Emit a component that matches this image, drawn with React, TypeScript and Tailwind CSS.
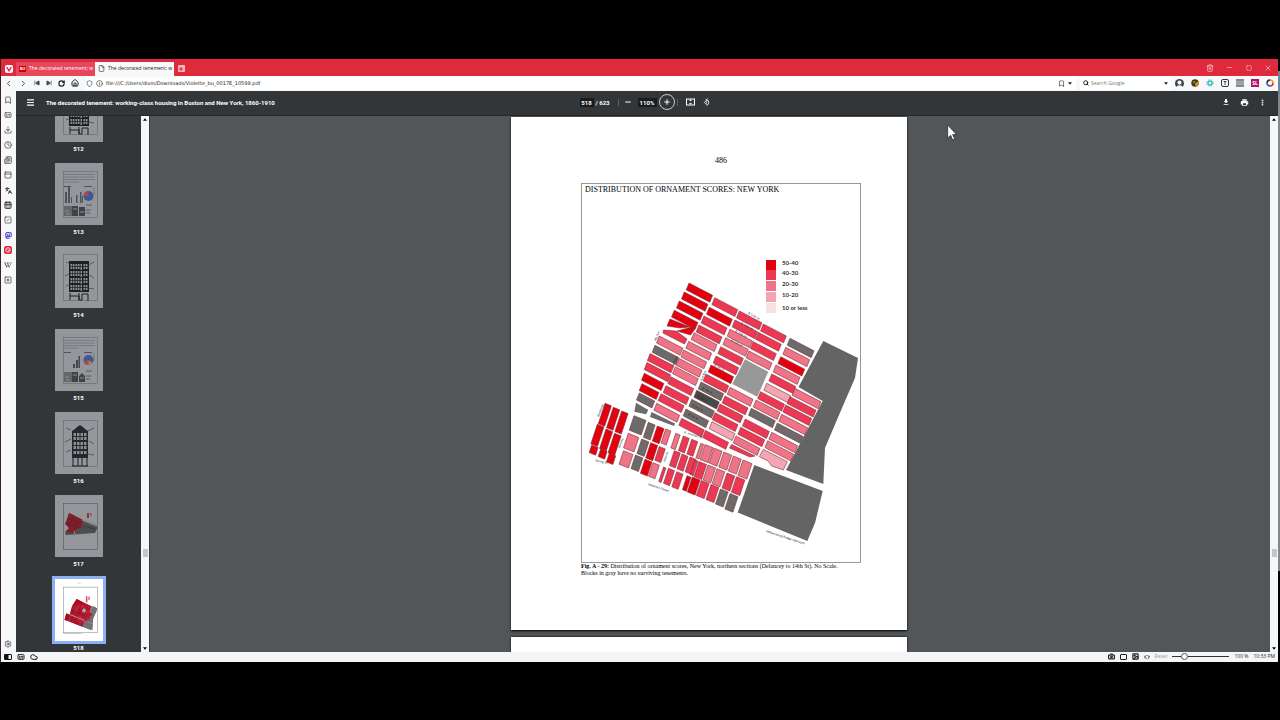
import * as React from "react";
import {
  Bookmark,
  CalendarDays,
  Camera,
  Captions,
  ChevronLeft,
  ChevronRight,
  Clock,
  Cloud,
  Code,
  Download,
  File,
  Home,
  Image as ImageIcon,
  Info,
  Languages,
  Menu,
  Minus,
  MoreVertical,
  Newspaper,
  PanelTop,
  Plus,
  RotateCw,
  Search,
  Settings,
  Shield,
  SkipBack,
  SkipForward,
  Square,
  SquareCheck,
  SquarePlus,
  Trash2,
  X,
} from "lucide-react";
import { MdDownload, MdPrint } from "react-icons/md";
import { SiMastodon, SiWikipedia } from "react-icons/si";

const D = "#e3000f"; // 50-40
const M = "#ec3853"; // 40-30
const P = "#ef7488"; // 20-30
const L = "#f4a5b3"; // 10-20
const X0 = "#f8e1e3"; // 10 or less
const G = "#6b6b6b"; // no surviving tenements
const K = "#454947";

type Block = [number, number, string];

// north of Houston St: top-left corner of each block, one list per column
const columns: { w: number; blocks: Block[] }[] = [
  {
    w: 23.6,
    blocks: [
      [689, 283, D], [684.3, 292, D], [679.3, 301, D], [674.3, 310.2, D],
      [659.3, 336, P], [655, 345.3, G], [650.2, 353.6, M], [647, 362.6, M],
    ],
  },
  { w: 19.6, blocks: [[644.3, 373.3, D]] },
  { w: 17, blocks: [[642, 383.7, D]] },
  { w: 15.4, blocks: [[639.3, 393, G]] },
  {
    w: 23,
    blocks: [
      [714.7, 297.7, M], [709.3, 307.3, D], [704, 316, M], [699, 325, M],
      [694, 332.7, P], [688.7, 341.3, P], [683.7, 350, P], [679, 358.3, P],
      [675.3, 366.7, P], [670.7, 376.7, M], [666, 385.7, M], [661, 393.7, M],
      [656.7, 403.3, P],
    ],
  },
  {
    w: 22.6,
    blocks: [
      [739.3, 311, M], [735, 320, M], [730, 329.3, P], [725.7, 337.7, P],
      [720.7, 346.7, M], [716, 356, M], [711, 365, D], [706, 374, M],
      [701, 382, G], [696.7, 390.3, K], [691.7, 399.3, G], [686, 409, G],
      [681.7, 418.3, M],
    ],
  },
  {
    w: 23,
    blocks: [
      [763.3, 324, M], [758.3, 332.3, M], [753.3, 341.7, M], [749, 351, P],
      [730, 387.3, P], [725, 396, M], [720, 404, M], [715, 412.7, M],
      [712, 421.7, L], [705.5, 430.5, M],
    ],
  },
  {
    w: 24,
    blocks: [
      [790, 338.3, G], [785.7, 347.3, P], [780.7, 356.7, D], [776, 365, P],
      [771.7, 374, M], [766.7, 383.3, L], [760.5, 391.7, M], [756, 400, P],
      [751.3, 408.3, G], [745.3, 419, M], [740.7, 427.3, M], [736, 436, P],
    ],
  },
  {
    w: 26,
    blocks: [
      [795, 388.3, P], [790, 396.7, M], [785.7, 405, M], [781.7, 414.3, P],
      [777.3, 423, G], [771.7, 432.3, P], [767.7, 440.7, P],
    ],
  },
];

const bar = (x: number, y: number, w: number) => {
  const dy = w * 0.52;
  return `${x},${y} ${x + w},${y + dy} ${x + w - 2.8},${y + dy + 6.9} ${x - 2.8},${y + 6.9}`;
};

// [x, y, width, height, fill] for the upright blocks south of Houston St
const southBlocks: [number, number, number, number, string][] = [
  [605, 403.3, 6.4, 20.5, D], [613.3, 407.3, 6.4, 20.5, D], [621.7, 411, 6.4, 20.5, D],
  [597.3, 424.3, 6.6, 19.5, D], [606, 429, 6.6, 19.5, D], [614.5, 433.3, 6.6, 19.5, D],
  [591.7, 445, 6.4, 7.6, D], [600.7, 449, 6.4, 7.6, D], [609.3, 453.3, 6.4, 8.6, D],
  [634, 415.7, 12, 14.5, G], [628.3, 433.3, 10.5, 14.5, P], [623.5, 450.7, 9.5, 13.5, P],
  [648.3, 422.3, 6.8, 15, G], [641.7, 439, 7.2, 14.5, G], [635.5, 455, 7.4, 13.6, G],
  [657.3, 426, 6.8, 15, D], [650.7, 442.7, 7, 15.2, D], [645, 459.3, 7, 14, D],
  [665.7, 429, 5.2, 14, P], [659.3, 446.5, 6, 13.7, M], [653, 462.7, 6.4, 13.5, P],
  [675.7, 433.3, 4.4, 14.6, P], [683.3, 436, 6, 14.6, M], [691.7, 439.3, 6, 14.6, M],
  [674.3, 450.7, 6, 14.8, M], [682, 454, 6, 14.8, M], [690, 457, 6, 14.8, M],
  [663.5, 467, 2.4, 14.5, M], [668.5, 468.3, 6, 15, M], [676.7, 471.7, 6.4, 15, M],
  [700.7, 443.3, 3, 14.5, P], [705, 444.5, 8, 15, P], [714, 448, 8, 15, P],
  [723.7, 452, 8, 15, P], [733.3, 456, 8, 15, P], [743, 460, 9, 15.5, P],
  [695, 460, 3, 14.5, M], [699, 461.5, 7.6, 15, M], [708, 465, 7.6, 15, P],
  [717, 468.7, 7.8, 15, P], [727, 473, 7.8, 15, M], [736.5, 476.7, 8.4, 15.5, M],
  [687, 475.7, 4, 14, D], [692.3, 477, 7.8, 15, D], [701.3, 480.5, 7.8, 15, M],
  [711, 484.5, 7.8, 15, M], [720.5, 489, 7.6, 15, G], [730, 493.5, 8, 15.5, G],
];

const upright = (x: number, y: number, w: number, h: number) => {
  const dy = w * 0.4;
  const sx = h * 0.33;
  return `${x},${y} ${x + w},${y + dy} ${x + w - sx},${y + dy + h} ${x - sx},${y + h}`;
};

const legend: { fill: string; y: number; textY: number; label: string }[] = [
  { fill: D, y: 260, textY: 265, label: "50-40" },
  { fill: M, y: 270, textY: 275, label: "40-30" },
  { fill: P, y: 281, textY: 286, label: "20-30" },
  { fill: L, y: 292, textY: 297, label: "10-20" },
  { fill: X0, y: 303, textY: 310, label: "10 or less" },
];

// x, y, angle, name
const streets: [number, number, number, string][] = [
  [748, 314, 28, "E 14th St"],
  [741, 324, 28, "E 13th St"],
  [735, 332, 28, "E 12th St"],
  [731, 341, 28, "E 11th St"],
  [714, 366, 28, "E 7th St"],
  [702, 389, 28, "E 4th St"],
  [697, 397, 28, "E 3rd St"],
  [692, 406, 28, "E 2nd St"],
  [688, 415, 28, "E 1st St"],
  [684, 433, 18, "E. Houston St"],
  [648, 485, 19, "Delancey Street"],
  [595, 461, 14, "Spring St"],
  [766, 532, 18, "Williamsburg Bridge Approach"],
  [656, 341, -68, "4th Ave"],
  [599, 417, -70, "Broadway"],
  [674, 366, -66, "3rd Ave"],
  [702, 381, -66, "2nd Ave"],
  [620, 448, -70, "Bowery"],
  [665, 462, -70, "Allen St"],
];

function Blocks() {
  return (
    <g strokeLinejoin="round">
      <g stroke="#7a3037" strokeWidth="0.6">
        {columns.map((col, i) =>
          col.blocks.map(([x, y, fill]) => (
            <polygon key={`${i}-${x}`} points={bar(x, y, col.w)} fill={fill} />
          ))
        )}
        {southBlocks.map(([x, y, w, h, fill]) => (
          <polygon key={`${x}-${y}`} points={upright(x, y, w, h)} fill={fill} />
        ))}
        <polygon points="670,319 690,327 680,328 667,326" fill={D} />
        <polygon points="677,331 692,327 695,329 690.5,335" fill={D} />
        <polygon points="663.5,330 676,331 687,339 684.5,344 663,333" fill={M} />
        <polygon points="731.7,444.5 755,456 750,457 729.5,448" fill={M} />
        <polygon points="763.3,449.3 787.3,461.7 783.3,470 771.7,466 768,461 759.3,456.7" fill={L} />
      </g>
      <g fill={G}>
        <polygon points="636,402.7 648.3,410 646,414.3 634.3,411.7" />
        <polygon points="651.5,412 675,423.5 674,426 650,417" />
        <polygon points="745,359.3 768.3,371.7 757.3,396.7 732.3,384" fill="#989898" />
        <polygon points="823.3,341 858,358 855,378 842,408 825,448 823.3,484 786,470 822.7,401 798.5,387" fill="#646464" />
        <polygon points="754.3,465 822.7,491 815,523 807.3,541 737.7,512.5" fill="#646464" />
      </g>
    </g>
  );
}

function OrnamentMap() {
  return (
    <svg viewBox="582 184 278 378" className="block w-full" aria-label="Map of ornament scores">
      <Blocks />
      {legend.map(({ fill, y, textY, label }) => (
        <g key={label}>
          <rect x="766" y={y} width="10" height="10" fill={fill} />
          <text x="782" y={textY} fontSize="6" fontWeight="700" fontFamily="Lato, sans-serif" fill="#333">
            {label}
          </text>
        </g>
      ))}
      {streets.map(([x, y, r, name]) => (
        <text
          key={name}
          transform={`translate(${x} ${y}) rotate(${r})`}
          fontSize="3"
          fontFamily="'Liberation Sans', sans-serif"
          fill="#222"
        >
          {name}
        </text>
      ))}
    </svg>
  );
}

function MapThumb() {
  return (
    <svg viewBox="511 117 396 513" preserveAspectRatio="none" className="size-full">
      <rect x="581" y="184" width="279" height="378" fill="none" stroke="#777" strokeWidth="4" />
      <polygon points="690,283 815,345 795,388 822,402 784,470 755,465 738,512 590,455 604,403 634,410 652,340" fill="#8c1a2a" />
      <g opacity=".75">
        <Blocks />
      </g>
      <polygon points="690,283 815,345 795,388 822,402 784,470 755,465 738,512 590,455 604,403 634,410 652,340" fill="#b0001c" opacity=".45" />
      <polygon points="823,341 858,358 855,378 825,448 823,541 738,512 755,465 786,470 822,401 798,387" fill="#666" opacity=".7" />
      <polygon points="745,359 768,372 757,397 732,384" fill="#aaa" />
      <path d="M630 410l125 50" stroke="#fff" strokeWidth="4" fill="none" />
      <rect x="766" y="260" width="12" height="50" fill={M} />
      <rect x="782" y="262" width="18" height="30" fill="#c9a5a8" />
      <path d="M581 568h150M700 150h24" stroke="#999" strokeWidth="4" />
    </svg>
  );
}

function LowerMapThumb() {
  return (
    <svg viewBox="0 0 48 62" className="size-full">
      <rect x="8.5" y="8.5" width="34" height="46" fill="none" stroke="#555" strokeWidth=".6" />
      <path d="M14 18l14 7 13 5 1.500 3-2.500 5-14 1-15 1-1-2 5-4-3-4 1-6z" fill="#4b4d4f" />
      <path d="M14 18l14 7-2 8-7 2 2 3-11-1 4-4-4-4 2-5z" fill="#861c2b" />
      <path d="M12 23l14 6M11 28l13 5M19 20l-5 13M24 23l-5 12M28 31l12 3" stroke="#3f2529" strokeWidth=".6" />
      <path d="M19 36l1 3M27 25l14 6" stroke="#a9acae" strokeWidth=".7" />
      <path d="M32 18h2v5h-2z" fill="#96293a" />
      <path d="M35 18h1.500v3H35z" fill="#6f5a5e" />
    </svg>
  );
}

function ChartThumb({ alt }: { alt?: boolean }) {
  return (
    <svg viewBox="0 0 48 62" className="size-full">
      <rect x="8.5" y="8.5" width="34" height="46" fill="none" stroke="#666" strokeWidth=".6" />
      <path d="M9 11.500h31M9 14h31M9 16.500h31M9 19h15" stroke="#5c6064" strokeWidth=".5" />
      <path d="M9 23.500h7M29 23.500h8" stroke="#333" strokeWidth=".7" />
      {alt ? (
        <path d="M18 39v-4h2v4zM21 39v-8h2v8zM23.500 39V27h1.500v12z" fill="#4a4548" />
      ) : (
        <path d="M10 40V29h2v11zM13 40V24h2v16zM16 40v-6h1v6zM21 40v-8h1.500v8zM25 40V29h1.500v11zM27 40v-7h1v7z" fill="#4f5256" />
      )}
      <circle cx="33.500" cy={alt ? 31 : 33} r="5" fill="#3f5796" />
      <path d={alt ? "M33.500 31l-5 1a5 5 0 0 0 4.500 4z" : "M33.500 33v-5a5 5 0 0 0-5 5z"} fill="#a84a48" />
      {alt && <path d="M33.500 31v5a5 5 0 0 0 4-2z" fill="#b8873c" />}
      <path d="M9 43h9v10H9z" fill="#64676a" />
      <path d={alt ? "M17 43h6v10h-6zM24 53v-6l3-3 3 3v6z" : "M17 43h6v10h-6zM24 53v-9h6v9z"} fill="#404346" />
      <path d="M10 48h4M11 51h4M18 46h4M25 49h4" stroke="#8d9094" />
      <path d="M31 42h6M31 47h5M31 50h4" stroke="#333" strokeWidth=".6" />
      <path d="M39 24v8" stroke="#666" strokeWidth=".6" />
    </svg>
  );
}

function BuildingThumb({ gabled }: { gabled?: boolean }) {
  const rows = gabled ? [21, 25, 30, 34, 39] : [18, 25, 32, 39];
  return (
    <svg viewBox="0 0 48 62" className="size-full">
      <rect x="8.500" y="8.500" width="34" height="46" fill="none" stroke="#666" strokeWidth=".6" />
      {gabled ? (
        <path d="M17 46V19l3-2 2-2 3-2 3 2 2 2 3 2v27z" fill="#26292b" />
      ) : (
        <path d="M14 46V15h20v31z" fill="#1d2022" />
      )}
      {rows.map((y) => (
        <g key={y} fill="#8b8e92">
          {gabled ? (
            <path d={`M18.500 ${y}h2.500v3h-2.500zM22 ${y}h2.500v3h-2.500zM25.500 ${y}h2.500v3h-2.500zM29 ${y}h2.500v3h-2.500z`} />
          ) : (
            <path d={`M15.500 ${y}h4v5h-4zM20.500 ${y}h4v5h-4zM25.500 ${y}h1.500v6h-1.500zM28.500 ${y}h4v5h-4z`} />
          )}
          {!gabled && <path d={`M17.500 ${y}v5M22.500 ${y}v5M30.500 ${y}v5M15 ${y + 2.5}h18`} stroke="#1d2022" strokeWidth=".7" />}
        </g>
      ))}
      <path
        d={gabled ? "M18 46v8M23 46v8M27 46v8M32 46v8M17 54h16" : "M15 47v7M24 47v7h3v-6h6v7M15 50h9v4"}
        fill="none"
        stroke="#1d2022"
      />
      <path d="M11 16l5 2M10 30l6-3M11 40l5-2M33 19l6-3M34 29l5 3M33 42l6 1" stroke="#333" strokeWidth=".6" />
    </svg>
  );
}

const pages = [
  { n: 512, art: <BuildingThumb /> },
  { n: 513, art: <ChartThumb /> },
  { n: 514, art: <BuildingThumb /> },
  { n: 515, art: <ChartThumb alt /> },
  { n: 516, art: <BuildingThumb gabled /> },
  { n: 517, art: <LowerMapThumb /> },
  { n: 518, art: <MapThumb /> },
];

const panels = [
  { label: "Bookmarks", icon: <Bookmark size={8} /> },
  { label: "Reading list", icon: <Captions size={8} /> },
  { label: "Downloads", icon: <Download size={8} /> },
  { label: "History", icon: <Clock size={8} /> },
  { label: "Notes", icon: <Newspaper size={8} /> },
  { label: "Window", icon: <PanelTop size={8} /> },
  { label: "Translate", icon: <Languages size={7} strokeWidth={3} /> },
  { label: "Calendar", icon: <CalendarDays size={8} strokeWidth={3} /> },
  { label: "Tasks", icon: <SquareCheck size={8} /> },
  { label: "Mastodon", icon: <SiMastodon size={7} className="text-[#5a4bd6]" /> },
  { label: "Vivaldi", icon: <VivaldiBadge /> },
  { label: "Wikipedia", icon: <SiWikipedia size={8} /> },
  { label: "Add web panel", icon: <SquarePlus size={8} /> },
];

function VivaldiBadge() {
  return (
    <svg viewBox="0 0 14 14" className="size-[8px]">
      <rect width="14" height="14" rx="4" fill="#d9213c" />
      <circle cx="7" cy="7" r="4" fill="none" stroke="#fff" strokeWidth="1.500" />
      <path d="M7 5v2.500l2 1" fill="none" stroke="#fff" strokeWidth="1.200" />
    </svg>
  );
}

function IconButton({ label, className = "", children }: { label: string; className?: string; children: React.ReactNode }) {
  return (
    <button type="button" aria-label={label} className={`flex shrink-0 items-center justify-center ${className}`}>
      {children}
    </button>
  );
}

function Caret({ up }: { up?: boolean }) {
  return (
    <svg viewBox="0 0 6 4" className="h-[3px] w-[4px]">
      <path d={up ? "M0 4L3 0l3 4z" : "M0 0l3 4 3-4z"} fill="currentColor" />
    </svg>
  );
}

function Scrollbar() {
  return (
    <div className="flex w-[8px] shrink-0 flex-col items-center justify-between bg-[#f4f6f8] py-[2px] text-black">
      <Caret up />
      <div className="grow-[435]" />
      <div className="h-[8px] w-[5px] bg-[#c3c5c8]" />
      <div className="grow-[92]" />
      <Caret />
    </div>
  );
}

function TitleBar() {
  return (
    <header className="flex h-[17px] items-end bg-[#df293c] text-[5px] text-white">
      <IconButton label="Vivaldi menu" className="h-[14px] w-[15px]">
        <svg viewBox="0 0 16 16" className="size-[8px]">
          <rect width="16" height="16" rx="4" fill="#fff" />
          <path d="M4 5l4 7 4-7" fill="none" stroke="#df293c" strokeWidth="3" strokeLinecap="round" strokeLinejoin="round" />
        </svg>
      </IconButton>
      <button type="button" className="flex h-[14px] w-[79px] items-center gap-[3px] bg-[#e8465a] pl-[3px]">
        <span className="w-[7px] bg-[#c00] text-center text-[4px] leading-[6px] font-bold">BU</span>
        <span className="whitespace-nowrap">The decorated tenement: w</span>
      </button>
      <button type="button" className="flex h-[14px] w-[79px] items-center gap-[3px] bg-[#f7f8fa] pl-[3px] text-[#222]">
        <File size={7} className="shrink-0" />
        <span className="whitespace-nowrap">The decorated tenement: w</span>
      </button>
      <IconButton label="New tab" className="h-[14px] w-[14px]">
        <span className="flex size-[7px] items-center justify-center rounded-[1px] bg-[#f8b5bd] text-[#df293c]">
          <Plus size={6} strokeWidth={4} />
        </span>
      </IconButton>
      <div className="mb-[4px] ml-auto flex items-center gap-3 pr-[6px] text-[#fbd5d9]">
        <IconButton label="Closed tabs"><Trash2 size={8} /></IconButton>
        <IconButton label="Minimize"><Minus size={7} /></IconButton>
        <IconButton label="Maximize" className="ml-px"><Square size={6} /></IconButton>
        <IconButton label="Close"><X size={8} /></IconButton>
      </div>
    </header>
  );
}

function AddressBar() {
  return (
    <div className="flex h-[15px] items-center bg-[#f7f8fa] text-[#222]">
      <div className="flex items-center gap-[6px] pl-[3px]">
        <IconButton label="Back"><ChevronLeft size={9} /></IconButton>
        <IconButton label="Forward"><ChevronRight size={9} /></IconButton>
        <IconButton label="Rewind"><SkipBack size={6} fill="#555" /></IconButton>
        <IconButton label="Fast forward"><SkipForward size={6} fill="#555" /></IconButton>
        <IconButton label="Reload"><RotateCw size={7} strokeWidth={4} /></IconButton>
        <IconButton label="Home"><Home size={8} strokeWidth={3} /></IconButton>
      </div>
      <div className="ml-[7px] flex h-[13px] grow items-center gap-[3px] bg-white">
        <Shield size={7} />
        <Info size={7} />
        <input
          aria-label="Address"
          className="w-0 grow font-['DejaVu_Sans',sans-serif] text-[5px] leading-[10px] outline-none"
          defaultValue="file:///C:/Users/divin/Downloads/Violette_bu_0017E_10599.pdf"
        />
        <IconButton label="Bookmark page"><Bookmark size={7} /></IconButton>
        <IconButton label="Show bookmarks" className="mr-1"><Caret /></IconButton>
      </div>
      <div className="ml-1 flex h-[13px] w-[91px] items-center gap-[2px] bg-white pl-[3px]">
        <Search size={6} strokeWidth={4} />
        <input aria-label="Search" placeholder="Search Google" className="w-0 grow text-[5px] leading-[10px] outline-none placeholder:text-[#777]" />
        <IconButton label="Search engines" className="mr-[3px]"><Caret /></IconButton>
      </div>
      <div className="flex items-center gap-[7px] px-[4px]">
        <IconButton label="Profile">
          <svg viewBox="0 0 20 20" className="size-[9px]">
            <circle cx="10" cy="10" r="10" fill="#444" />
            <circle cx="10" cy="8" r="4.500" fill="#f7f8fa" />
            <path d="M3 20a7 6 0 0 1 14 0z" fill="#f7f8fa" />
          </svg>
        </IconButton>
        <IconButton label="Privacy Badger">
          <svg viewBox="0 0 16 16" className="size-[8px]">
            <circle cx="8" cy="8" r="7.500" fill="#4a3a1c" />
            <path d="M8 8L15 5A7 7 0 0 1 9 15z" fill="#c59524" />
            <circle cx="6" cy="6" r="2" fill="#a8842e" />
          </svg>
        </IconButton>
        <IconButton label="Extension settings">
          <svg viewBox="0 0 16 16" className="size-[8px]" fill="none" stroke="#45bdb9">
            <circle cx="8" cy="8" r="4" strokeWidth="3" />
            <circle cx="8" cy="8" r="6.500" strokeWidth="2" strokeDasharray="2.500 2.600" />
          </svg>
        </IconButton>
        <IconButton label="Text tool">
          <span className="flex size-[8px] items-center justify-center rounded-[2px] border border-[#333] text-[5px] leading-none font-bold">T</span>
        </IconButton>
        <IconButton label="Reader"><span className="size-[8px] border-y-2 border-[#8a8a8a] bg-[#a2a2a2]" /></IconButton>
        <IconButton label="Script lens">
          <span className="flex h-[8px] w-[8px] items-center justify-center bg-[#b3126c] text-[5px] leading-none font-bold text-white">SL</span>
        </IconButton>
        <IconButton label="Color picker">
          <svg viewBox="0 0 16 16" className="size-[8px]" fill="none" strokeWidth="3">
            <path d="M8 2a6 6 0 0 1 6 6" stroke="#e8a020" />
            <path d="M14 8a6 6 0 0 1-6 6" stroke="#d9263a" />
            <path d="M8 14a6 6 0 0 1-6-6" stroke="#2458c8" />
            <path d="M2 8a6 6 0 0 1 6-6" stroke="#222" />
          </svg>
        </IconButton>
      </div>
    </div>
  );
}

function PdfToolbar() {
  return (
    <div className="grid h-[25px] grid-cols-[1fr_auto_1fr] items-center border-b border-[#26292c] bg-[#323639] pb-px font-[Roboto,sans-serif] text-[6px] font-bold text-white">
      <div className="flex items-center gap-[11px] pl-[10px]">
        <IconButton label="Menu"><Menu size={9} strokeWidth={3} /></IconButton>
        <h1 className="whitespace-nowrap">The decorated tenement: working-class housing in Boston and New York, 1860-1910</h1>
      </div>
      <div className="flex items-center pr-[4px]">
        <input aria-label="Page" defaultValue="518" className="h-[9px] w-[14px] bg-[#191b1c] text-center outline-none" />
        <span className="ml-[2px] w-[14px] whitespace-nowrap">/ 623</span>
        <span className="ml-[8px] h-[7px] w-px bg-[#5c6063]" />
        <IconButton label="Zoom out" className="ml-[5px]"><Minus size={8} strokeWidth={3} /></IconButton>
        <input aria-label="Zoom" defaultValue="110%" className="ml-[6px] h-[9px] w-[19px] bg-[#191b1c] text-center outline-none" />
        <IconButton label="Zoom in" className="ml-[2px] size-[16px] rounded-full border border-[#c8cacc]"><Plus size={8} strokeWidth={3} /></IconButton>
        <span className="ml-[2px] h-[7px] w-px bg-[#5c6063]" />
        <IconButton label="Fit to page" className="ml-[8px]">
          <svg viewBox="0 0 18 16" className="h-[8px] w-[9px]" fill="none" stroke="currentColor" strokeWidth="2">
            <rect x="1" y="2" width="16" height="12" />
            <path d="M9 3v3M9 10v3M7 6l2-2 2 2M7 10l2 2 2-2" />
          </svg>
        </IconButton>
        <IconButton label="Rotate" className="ml-[8px]">
          <svg viewBox="0 0 18 18" className="size-[8px]" fill="none" stroke="currentColor" strokeWidth="2">
            <path d="M7 4a6 6 0 1 1 0 12M10 1L7 4l3 3" />
            <path d="M6 7l3 3-3 3-3-3z" />
          </svg>
        </IconButton>
      </div>
      <div className="flex items-center justify-end gap-[10px] pr-[12px]">
        <IconButton label="Download"><MdDownload size={8} /></IconButton>
        <IconButton label="Print"><MdPrint size={9} /></IconButton>
        <IconButton label="More"><MoreVertical size={7} strokeWidth={4} /></IconButton>
      </div>
    </div>
  );
}

function Thumbnails() {
  return (
    <div className="flex w-[133px] shrink-0 overflow-hidden">
      <div className="grow">
        <ul className="-mt-[36px] flex flex-col items-center gap-[9px]">
          {pages.map(({ n, art }) => (
            <li key={n}>
              <button type="button" className="flex flex-col items-center gap-[2px]">
                <span
                  className={
                    n === 518
                      ? "mt-px block h-[62px] w-[48px] bg-white ring-[3px] ring-[#8ab0f5]"
                      : "block h-[62px] w-[48px] bg-[#93969a]"
                  }
                >
                  {art}
                </span>
                <span className="font-[Roboto,sans-serif] text-[6px] leading-[10px] font-bold text-white">{n}</span>
              </button>
            </li>
          ))}
        </ul>
      </div>
      <Scrollbar />
    </div>
  );
}

function Viewer() {
  return (
    <main className="flex grow overflow-hidden border-l border-[#3a3d40] bg-[#525659]">
      <div className="flex grow flex-col items-center gap-[7px] pt-px pr-[2px]">
        <article className="w-[396px] shrink-0 bg-white pb-[53px] font-['Liberation_Serif',serif] text-black shadow-[0_1px_2px_#000]">
          <p className="pt-[39px] pl-[24px] text-center text-[8px] leading-[10px]">486</p>
          <figure className="mt-[17px] ml-[70px] w-[280px]">
            <div className="grid border border-[#999]">
              <h2 className="z-10 col-start-1 row-start-1 pt-[2px] pl-[3px] text-[8px] leading-[8px]">
                DISTRIBUTION OF ORNAMENT SCORES: NEW YORK
              </h2>
              <div className="col-start-1 row-start-1">
                <OrnamentMap />
              </div>
            </div>
            <figcaption className="text-[6px] leading-[7px] whitespace-nowrap">
              <b>Fig. A - 29:</b> Distribution of ornament scores, New York, northern sections (Delancey to 14th St). No Scale.
              <br />
              Blocks in gray have no surviving tenements.
            </figcaption>
          </figure>
        </article>
        <article className="w-[396px] grow bg-white shadow-[0_0_2px_#000]" />
      </div>
      <Scrollbar />
    </main>
  );
}

function StatusBar() {
  return (
    <footer className="flex h-[10px] shrink-0 items-center bg-[#f4f5f8] text-[5px] text-[#222]">
      <div className="flex items-center gap-[5px] pl-[3px]">
        <IconButton label="Toggle panel">
          <svg viewBox="0 0 16 12" className="h-[6px] w-[8px]">
            <rect x="1" y="1" width="14" height="10" rx="1" fill="none" stroke="#111" strokeWidth="2" />
            <rect x="1" y="1" width="8" height="10" fill="#111" />
          </svg>
        </IconButton>
        <IconButton label="Break mode"><Captions size={8} strokeWidth={3} /></IconButton>
        <IconButton label="Sync"><Cloud size={8} strokeWidth={3} /></IconButton>
      </div>
      <div className="ml-auto flex items-center gap-[5px] pr-[3px]">
        <IconButton label="Capture page"><Camera size={7} strokeWidth={4} /></IconButton>
        <IconButton label="Page tiling">
          <span className="h-[6px] w-[7px] rounded-[1px] border border-[#222]" />
        </IconButton>
        <IconButton label="Toggle images"><ImageIcon size={7} strokeWidth={4} /></IconButton>
        <IconButton label="Page actions"><Code size={6} strokeWidth={4} /></IconButton>
        <button type="button" className="text-[#999]">Reset</button>
        <input
          type="range"
          aria-label="Page zoom"
          min={20}
          max={500}
          defaultValue={100}
          className="h-[7px] w-[57px] appearance-none bg-transparent bg-[linear-gradient(#333,#333)] bg-[length:100%_1px] bg-center bg-no-repeat [&::-webkit-slider-thumb]:size-[7px] [&::-webkit-slider-thumb]:appearance-none [&::-webkit-slider-thumb]:rounded-full [&::-webkit-slider-thumb]:border [&::-webkit-slider-thumb]:border-[#555] [&::-webkit-slider-thumb]:bg-white"
        />
        <span>100 %</span>
        <span>10:33 PM</span>
      </div>
    </footer>
  );
}

export default function App() {
  return (
    <div className="relative flex h-screen flex-col bg-black py-[58px] font-['Open_Sans',sans-serif]">
      <div className="flex min-h-0 grow pt-px">
        <div className="flex min-w-0 grow flex-col border-l border-[#3b2226]">
          <TitleBar />
          <AddressBar />
          <div className="flex min-h-0 grow">
            <nav aria-label="Panels" className="flex w-[15px] shrink-0 flex-col bg-[#f7f8fa] pt-[2px] pr-px text-[#333]">
              {panels.map(({ label, icon }) => (
                <IconButton key={label} label={label} className="h-[15px]">{icon}</IconButton>
              ))}
              <IconButton label="Settings" className="mt-auto mb-[4px]"><Settings size={8} /></IconButton>
            </nav>
            <div className="flex min-w-0 grow flex-col bg-[#323639]">
              <PdfToolbar />
              <div className="flex min-h-0 grow">
                <Thumbnails />
                <Viewer />
              </div>
            </div>
          </div>
          <StatusBar />
        </div>
        <div className="flex w-[2px] shrink-0 flex-col">
          <div className="h-[12px]" />
          <div className="h-[24px] bg-[#6f8790]" />
          <div className="h-[476px] bg-[#85878a]" />
        </div>
      </div>
      <svg viewBox="0 0 10 17" className="absolute top-[124px] left-[947px] h-[17px] w-[10px]">
        <path d="M.7 1v13l3-2.700 2 4.700 2-.9-2-4.500h3.800z" fill="#fff" stroke="#222" strokeWidth=".7" />
      </svg>
    </div>
  );
}
